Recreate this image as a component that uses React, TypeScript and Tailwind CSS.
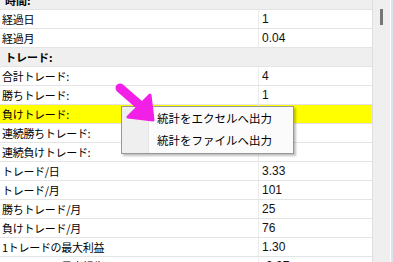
// Stats grid with a right-click export menu, pointed at by a magenta arrow.

type StatRow =
  | { kind: 'header'; label: string }
  | { kind: 'item'; label: string; value: string; highlight?: boolean };

// values under the context menu are not visible in the capture, so they stay blank
const ROWS: StatRow[] = [
  { kind: 'header', label: '時間:' },
  { kind: 'item', label: '経過日', value: '1' },
  { kind: 'item', label: '経過月', value: '0.04' },
  { kind: 'header', label: 'トレード:' },
  { kind: 'item', label: '合計トレード:', value: '4' },
  { kind: 'item', label: '勝ちトレード:', value: '1' },
  { kind: 'item', label: '負けトレード:', value: '', highlight: true },
  { kind: 'item', label: '連続勝ちトレード:', value: '' },
  { kind: 'item', label: '連続負けトレード:', value: '' },
  { kind: 'item', label: 'トレード/日', value: '3.33' },
  { kind: 'item', label: 'トレード/月', value: '101' },
  { kind: 'item', label: '勝ちトレード/月', value: '25' },
  { kind: 'item', label: '負けトレード/月', value: '76' },
  { kind: 'item', label: '1トレードの最大利益', value: '1.30' },
  { kind: 'item', label: '1トレードの最大損失', value: '-0.97' },
];

const JP = "font-['Noto_Sans_CJK_JP',sans-serif]";
const NUM = "font-['Liberation_Sans','Noto_Sans_CJK_JP',sans-serif]";

export default function App() {
  return (
    <div className="relative w-[393px] h-[262px] overflow-hidden bg-white flex">
      <div className="w-[372px] shrink-0 -mt-[9px]">
        {ROWS.map((r, i) =>
          r.kind === 'header' ? (
            <div
              key={i}
              className="h-[19px] flex items-center bg-[#efefef] border-b border-[#e4e4e4] pl-[5px]"
            >
              <span className={`${JP} text-[11px] font-bold text-black leading-none`}>{r.label}</span>
            </div>
          ) : (
            <div
              key={i}
              className={`h-[19px] flex border-b border-[#e4e4e4] ${r.highlight ? 'bg-[#ffff00]' : 'bg-white'}`}
            >
              <div className="w-[259px] flex items-center pl-[2px] border-r border-[#ececec]">
                <span className={`${JP} text-[11px] text-black leading-none tracking-[-0.3px]`}>{r.label}</span>
              </div>
              <div className="flex-1 flex items-center pl-[3px]">
                <span className={`${NUM} text-[12px] text-[#111] leading-none`}>{r.value}</span>
              </div>
            </div>
          ),
        )}
      </div>

      {/* vertical scrollbar */}
      <div className="flex-1 bg-[#efefef] border-l border-[#dedede] flex">
        <div className="w-[17px] flex justify-center">
          <div className="mt-[9px] w-[3px] h-[16px] bg-[#777777]" />
        </div>
        <div className="flex-1 bg-[#d6e4f3] border-l border-white" />
      </div>

      {/* context menu */}
      <div className="absolute left-[121px] top-[106px] w-[173px] h-[48px] border border-[#979797] bg-[#fbfbfb] shadow-[2px_2px_2px_rgba(0,0,0,0.25)] flex">
        <div className="w-[27px] bg-[#efefef] border-r border-[#e6e6e6]" />
        <div className="flex-1 flex flex-col justify-center pl-[8px] py-[1px]">
          <div className={`${JP} h-[23px] flex items-center text-[11.5px] text-black leading-none`}>統計をエクセルへ出力</div>
          <div className={`${JP} h-[23px] flex items-center text-[11.5px] text-black leading-none`}>統計をファイルへ出力</div>
        </div>
      </div>

      {/* pointer arrow */}
      <svg className="absolute left-[110px] top-[80px]" width="50" height="45" viewBox="0 0 50 45">
        <line x1="10" y1="8" x2="33" y2="28" stroke="#f21fe6" strokeWidth="9" strokeLinecap="round" />
        <polygon points="43,40 18,37 40,15" fill="#f21fe6" stroke="#f21fe6" strokeWidth="3" strokeLinejoin="round" />
      </svg>
    </div>
  );
}
